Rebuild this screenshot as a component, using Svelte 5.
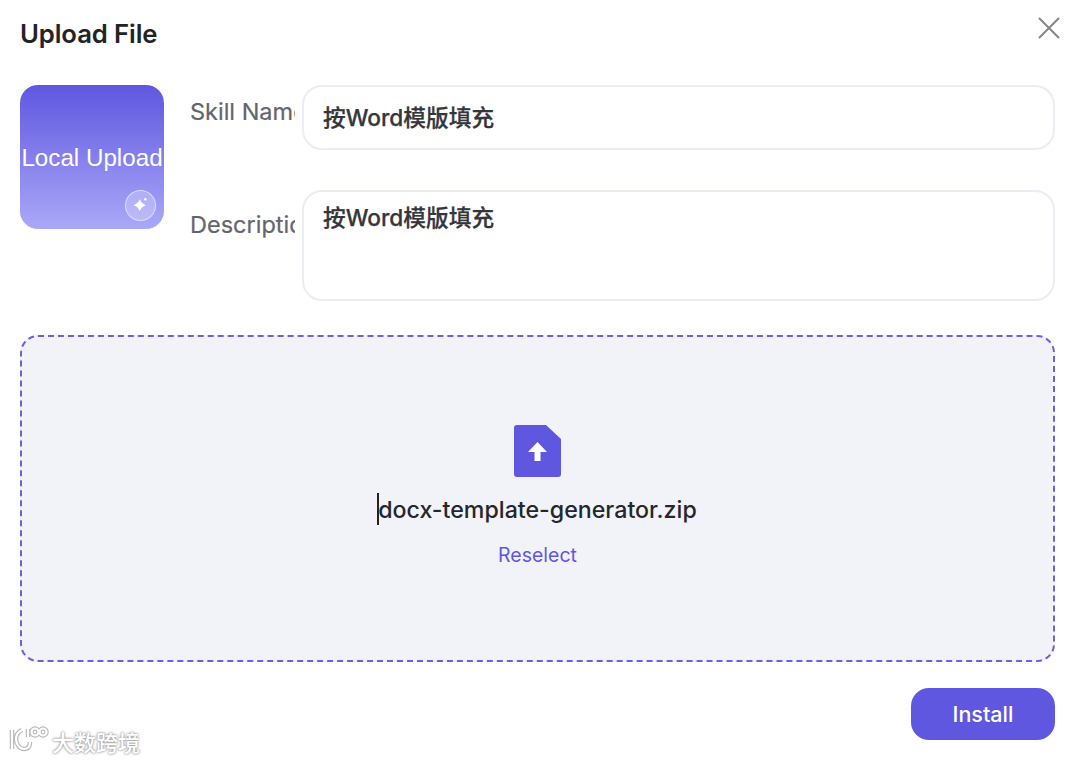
<script>
  let skillName = $state('按Word模版填充');
  let description = $state('按Word模版填充');
  const fileName = 'docx-template-generator.zip';
</script>

<div class="dialog">
  <header class="head">
    <h1>Upload File</h1>
    <button type="button" class="close" aria-label="Close">
      <svg width="22" height="22" viewBox="0 0 22 22" fill="none" stroke="#868686" stroke-width="2">
        <path d="M1 1l20 20M21 1L1 21" />
      </svg>
    </button>
  </header>

  <section class="form">
    <div class="cover">
      <span>Local Upload</span>
      <i class="spark">
        <svg width="22" height="22" viewBox="0 0 18 18" fill="#fff">
          <path d="M8 3.500c1 2.500 2.200 3.700 5 4.800-2.800 1.100-4 2.300-5 4.900-1-2.600-2.200-3.800-5-4.900 2.800-1.100 4-2.300 5-4.800z" />
          <circle cx="12.500" cy="3.500" r="1" />
        </svg>
      </i>
    </div>
    <div class="fields">
      <div class="row">
        <span class="label">Skill Name</span>
        <input class="box" bind:value={skillName} />
      </div>
      <div class="row">
        <span class="label desc">Description</span>
        <textarea class="box area" bind:value={description}></textarea>
      </div>
    </div>
  </section>

  <section class="drop">
    <svg class="file" width="47" height="52" viewBox="0 0 47 52">
      <path fill="#5f57e0" d="M3 0h29l15 14v35a3 3 0 0 1-3 3H3a3 3 0 0 1-3-3V3a3 3 0 0 1 3-3z" />
      <path fill="#fff" d="M23.500 17l9.500 10h-6.500v9h-6v-9H14z" />
    </svg>
    <p class="name"><i class="caret"></i>{fileName}</p>
    <button type="button" class="reselect">Reselect</button>
  </section>

  <footer class="foot">
    <div class="mark">
      <svg width="42" height="30" viewBox="0 0 42 30" fill="none">
        <g stroke="#b8b8b8" stroke-width="4.500">
          <path d="M3 5v19M13 5c-4 2-6 5-6 9s3 10 8 10 6-4 6-7M19 4v8" />
          <circle cx="26" cy="7" r="3.500" /><circle cx="34" cy="7" r="3.500" />
        </g>
        <g stroke="#fff" stroke-width="2.200">
          <path d="M3 5v19M13 5c-4 2-6 5-6 9s3 10 8 10 6-4 6-7M19 4v8" />
          <circle cx="26" cy="7" r="3.500" /><circle cx="34" cy="7" r="3.500" />
        </g>
      </svg>
      <span>大数跨境</span>
    </div>
    <button type="button" class="install">Install</button>
  </footer>
</div>

<style>
  :global(body) {
    background: #fff;
  }

  .dialog {
    width: 1080px;
    height: 762px;
    box-sizing: border-box;
    padding: 15px 25px 22px 20px;
    display: flex;
    flex-direction: column;
    font-family: Inter, 'Noto Sans CJK SC', sans-serif;
    overflow: hidden;
  }

  .head {
    display: flex;
    justify-content: space-between;
    height: 70px;
  }

  h1 {
    margin: 0;
    font-size: 25.700px;
    line-height: 38px;
    font-weight: 600;
    color: #222327;
    letter-spacing: -0.1px;
  }

  .close {
    border: 0;
    padding: 0;
    background: none;
    height: 22px;
    margin: 2px -5px 0 0;
  }

  .form {
    display: flex;
    gap: 26px;
    height: 250px;
  }

  .cover {
    width: 144px;
    height: 144px;
    flex: none;
    position: relative;
    border-radius: 18px;
    background: linear-gradient(180deg, #5f57e0 0%, #aaa8f8 100%);
    color: #fff;
    display: flex;
    align-items: center;
    justify-content: center;
    white-space: nowrap;
  }

  .cover span {
    font-family: 'Liberation Sans', sans-serif;
    font-size: 24.200px;
    margin-top: 2px;
  }

  .spark {
    position: absolute;
    right: 8px;
    bottom: 8px;
    width: 29px;
    height: 29px;
    border: 1px solid rgba(255, 255, 255, 0.5);
    border-radius: 50%;
    background: rgba(255, 255, 255, 0.25);
    display: flex;
    align-items: center;
    justify-content: center;
  }

  .fields {
    flex: 1;
    display: flex;
    flex-direction: column;
    gap: 40px;
  }

  .row {
    display: flex;
    align-items: flex-start;
  }

  .label {
    width: 105px;
    margin-right: 7px;
    flex: none;
    overflow: hidden;
    white-space: nowrap;
    font-size: 23.500px;
    line-height: 32px;
    margin-top: 11px;
    color: #63646d;
    -webkit-text-stroke: 0.2px #63646d;
  }

  .label.desc {
    margin-top: 19px;
  }

  .box {
    flex: 1;
    min-width: 0;
    height: 65px;
    box-sizing: border-box;
    padding: 0 19px 3px 19px;
    border: 2px solid #ecedf2;
    border-radius: 20px;
    outline: none;
    background: #fff;
    color: #35363b;
    font: 500 22.700px/32px Inter, 'Noto Sans CJK SC', sans-serif;
    -webkit-text-stroke: 0.25px #35363b;
  }

  .area {
    height: 111px;
    padding: 10px 19px;
    resize: none;
    display: block;
  }

  .drop {
    height: 327px;
    box-sizing: border-box;
    border: 2px dashed #6a62dc;
    border-radius: 18px;
    background: #f2f3f9;
    display: flex;
    flex-direction: column;
    align-items: center;
    padding-top: 88px;
  }

  .file {
    display: block;
  }

  .name {
    margin: 16px 0 0;
    position: relative;
    font-size: 23.200px;
    line-height: 34px;
    font-weight: 500;
    color: #25262b;
  }

  .caret {
    position: absolute;
    left: -1px;
    top: 0;
    width: 1.500px;
    height: 32px;
    background: #222;
  }

  .reselect {
    border: 0;
    padding: 0;
    background: none;
    margin-top: 15px;
    font: 400 19.500px/26px Inter, sans-serif;
    color: #5f57e0;
  }

  .foot {
    flex: 1;
    display: flex;
    align-items: flex-end;
    justify-content: space-between;
  }

  .mark {
    display: flex;
    align-items: center;
    gap: 1px;
    margin: 0 0 -17px -11px;
  }

  .mark span {
    color: #fff;
    font-size: 22px;
    font-weight: 500;
    margin-top: 2px;
    text-shadow: 0 0 2px #8f8f8f, 0 0 3px #a5a5a5;
  }

  .install {
    width: 144px;
    height: 52px;
    border: 0;
    border-radius: 18px;
    background: #5f57e0;
    color: #fff;
    font: 500 21.500px Inter, sans-serif;
  }
</style>
